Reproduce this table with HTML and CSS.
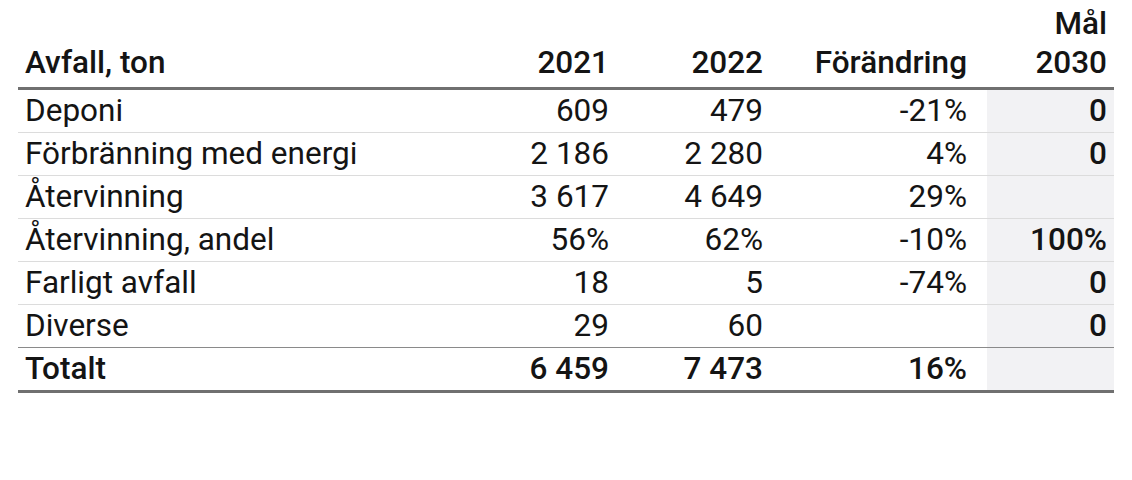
FILE: index.html
```html
<!DOCTYPE html>
<html lang="sv">
<head>
<meta charset="utf-8">
<link rel="stylesheet" href="styles.css">
</head>
<body>
<table class="waste">
  <colgroup>
    <col class="c-label">
    <col class="c-y1">
    <col class="c-y2">
    <col class="c-chg">
    <col class="c-goal">
  </colgroup>
  <thead>
    <tr>
      <th class="label">Avfall, ton</th>
      <th class="num">2021</th>
      <th class="num">2022</th>
      <th class="num chg">Förändring</th>
      <th class="num goal">Mål<br>2030</th>
    </tr>
  </thead>
  <tbody>
    <tr><td class="label">Deponi</td><td class="num">609</td><td class="num">479</td><td class="num chg">-21%</td><td class="num goal">0</td></tr>
    <tr><td class="label">Förbränning med energi</td><td class="num">2 186</td><td class="num">2 280</td><td class="num chg">4%</td><td class="num goal">0</td></tr>
    <tr><td class="label">Återvinning</td><td class="num">3 617</td><td class="num">4 649</td><td class="num chg">29%</td><td class="num goal"></td></tr>
    <tr><td class="label">Återvinning, andel</td><td class="num">56%</td><td class="num">62%</td><td class="num chg">-10%</td><td class="num goal">100%</td></tr>
    <tr><td class="label">Farligt avfall</td><td class="num">18</td><td class="num">5</td><td class="num chg">-74%</td><td class="num goal">0</td></tr>
    <tr class="last"><td class="label">Diverse</td><td class="num">29</td><td class="num">60</td><td class="num chg"></td><td class="num goal">0</td></tr>
  </tbody>
  <tfoot>
    <tr><td class="label">Totalt</td><td class="num">6 459</td><td class="num">7 473</td><td class="num chg">16%</td><td class="num goal"></td></tr>
  </tfoot>
</table>
</body>
</html>
```

FILE: styles.css
```css
html, body {
  margin: 0;
  padding: 0;
  background: #ffffff;
}

body {
  padding: 0 18px;
  font-family: Roboto, "Liberation Sans", sans-serif;
  color: #141414;
}

.waste {
  width: 1096px;
  border-collapse: collapse;
  table-layout: fixed;
  font-size: 31.5px;
}

.c-label { width: 391px; }
.c-y1 { width: 207px; }
.c-y2 { width: 154px; }
.c-chg { width: 217px; }
.c-goal { width: 127px; }

.waste th,
.waste td {
  padding: 0 7px;
  white-space: nowrap;
}

.waste th {
  font-weight: 500;
  line-height: 39px;
  vertical-align: bottom;
  padding-bottom: 5px;
  border-bottom: 3px solid #707070;
  height: 82px;
}

.waste td {
  font-weight: 400;
  height: 42px;
  line-height: 42px;
  border-bottom: 1px solid #dcdcdc;
}

.waste .label { text-align: left; }
.waste .num { text-align: right; }
.waste .chg { padding-right: 20px; }

.waste td.goal {
  background: #f2f2f4;
  font-weight: 500;
}

.waste tbody tr.last td {
  border-bottom: 1px solid #8a8a8a;
}

.waste tfoot td {
  font-weight: 500;
  border-bottom: 3px solid #707070;
}
```
